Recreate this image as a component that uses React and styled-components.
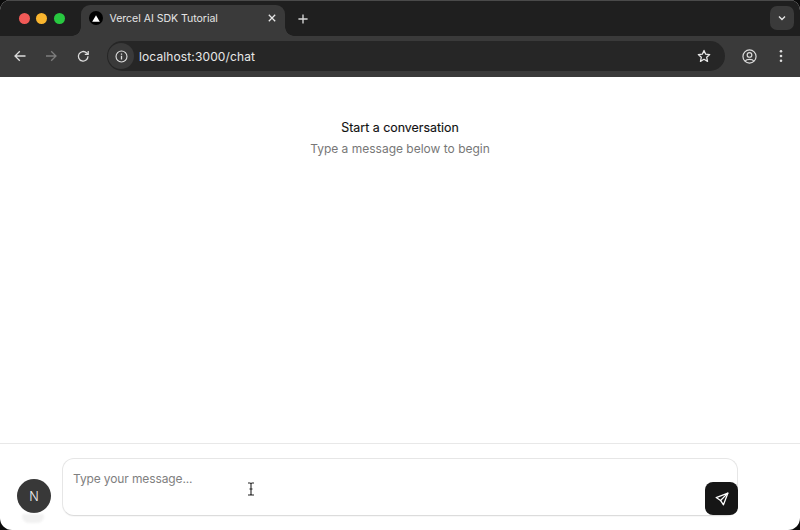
import React from "react";
import styled, { createGlobalStyle } from "styled-components";

const Global = createGlobalStyle`
  html, body { margin: 0; padding: 0; background: #0b0b0b; }
  body { width: 800px; height: 530px; overflow: hidden; font-family: Inter, "Liberation Sans", sans-serif; }
  * { box-sizing: border-box; }
`;

const Win = styled.div`
  width: 800px; height: 530px; display: flex; flex-direction: column;
  background: #fff; border-radius: 10px 10px 12px 12px; overflow: hidden;
`;
const TabStrip = styled.div`
  height: 36px; flex: none; background: #1f1f1f; display: flex; align-items: flex-end;
  border-top: 1px solid #4a4a4a; padding-left: 18.5px; position: relative;
`;
const Lights = styled.div`
  display: flex; gap: 6.5px; align-self: flex-start; margin-top: 12px; width: 62.5px;
`;
const Light = styled.span`
  width: 11px; height: 11px; border-radius: 50%; background: ${p => p.$c};
`;
const Tab = styled.div`
  width: 204px; height: 31px; background: #3a3a3a; border-radius: 9px 9px 0 0; position: relative;
  display: flex; align-items: center; padding: 0 9px 5px 8px; color: #e4e4e4; font-size: 10.6px;
  &::before, &::after {
    content: ""; position: absolute; bottom: 0; width: 9px; height: 9px;
    background: radial-gradient(circle at var(--c), #1f1f1f 8.5px, #3a3a3a 9px);
  }
  &::before { left: -9px; --c: 0 0; }
  &::after { right: -9px; --c: 100% 0; }
`;
const Favicon = styled.span`
  width: 14px; height: 14px; border-radius: 50%; background: #000; flex: none;
  display: flex; align-items: center; justify-content: center; margin-right: 6.5px;
`;
const TabTitle = styled.span`
  flex: 1; white-space: nowrap; letter-spacing: -0.05px;
`;
const Plus = styled.div`
  margin: 0 0 0 13px; width: 14px; height: 14px; align-self: center; display: flex; align-items: center; color: #d8d8d8;
`;
const TabSearch = styled.div`
  position: absolute; right: 6px; top: 5px; width: 24px; height: 24px; border-radius: 7px;
  background: #3a3a3a; display: flex; align-items: center; justify-content: center; color: #e4e4e4;
`;
const Toolbar = styled.div`
  height: 41px; flex: none; background: #3a3a3a; display: flex; align-items: center;
  padding: 0 11px 1px;
`;
const NavIcon = styled.span`
  width: 16px; height: 16px; flex: none; display: flex; align-items: center; justify-content: center;
  margin-right: ${p => p.$mr}px; color: ${p => p.$dim ? "#7d7d7d" : "#dcdcdc"};
`;
const Address = styled.div`
  width: 618px; height: 30px; border-radius: 15px; background: #262626; display: flex; align-items: center;
  color: #e8e8e8; font-size: 12px; padding-right: 14px; margin-right: 16px; flex: none;
`;
const InfoWrap = styled.span`
  width: 26px; height: 26px; border-radius: 50%; background: #3a3a3a; margin: 0 5px 0 1px;
  display: flex; align-items: center; justify-content: center; color: #e0e0e0;
`;
const Url = styled.span`
  flex: 1; letter-spacing: 0.12px;
`;
const Main = styled.main`
  flex: 1; display: flex; flex-direction: column; align-items: center; padding-top: 43px; min-height: 0;
`;
const Title = styled.div`
  font-size: 12.4px; font-weight: 400; color: #111; line-height: 16px; -webkit-text-stroke: 0.15px #111;
`;
const Sub = styled.div`
  font-size: 12px; color: #777; line-height: 16px; margin-top: 5px;
`;
const Footer = styled.footer`
  height: 87px; flex: none; border-top: 1px solid #e8e8e8; display: flex; align-items: flex-start;
  padding: 14px 62px 0 17px; gap: 11px; position: relative;
`;
const Avatar = styled.div`
  width: 34px; height: 34px; border-radius: 50%; background: #383838; color: #f2f2f2; flex: none;
  margin-top: 21px; display: flex; align-items: center; justify-content: center; font-size: 12.5px; font-weight: 300;
  position: relative;
  &::after {
    content: ""; position: absolute; left: 5px; top: 35px; width: 22px; height: 9px;
    background: #f1f1f1; border-radius: 2px 2px 8px 8px; filter: blur(1px);
  }
`;
const Composer = styled.div`
  width: 676px; height: 58px; border: 1px solid #e6e6e6; border-bottom-color: #dcdcdc; border-radius: 12px; background: #fff;
  padding: 12px 10px; font-size: 12px; line-height: 16px; color: #808080; position: relative; letter-spacing: -0.12px;
  box-shadow: 0 1px 1px rgba(0,0,0,.03);
`;
const Send = styled.div`
  position: absolute; right: -1px; bottom: 0; width: 33px; height: 33px; border-radius: 8px; background: #161616;
  display: flex; align-items: center; justify-content: center; color: #fff;
`;
const Caret = styled.svg`
  position: absolute; left: 184px; top: 23px;
`;

export default function App() {
  return (
    <>
      <Global />
      <Win>
        <TabStrip>
          <Lights>
            <Light $c="#f25a57" /><Light $c="#f9b52e" /><Light $c="#28c840" />
          </Lights>
          <Tab>
            <Favicon>
              <svg width="8" height="7" viewBox="0 0 8 7"><path d="M4 0.3 L7.8 6.7 H0.2 Z" fill="#fff" /></svg>
            </Favicon>
            <TabTitle>Vercel AI SDK Tutorial</TabTitle>
            <svg width="8" height="8" viewBox="0 0 10 10" fill="none" stroke="#e8e8e8" strokeWidth="1.6"><path d="M1 1 L9 9 M9 1 L1 9" /></svg>
          </Tab>
          <Plus>
            <svg width="10" height="10" viewBox="0 0 12 12" fill="none" stroke="currentColor" strokeWidth="1.6"><path d="M6 0.5 V11.5 M0.5 6 H11.5" /></svg>
          </Plus>
          <TabSearch>
            <svg width="10" height="10" viewBox="0 0 10 10" fill="none" stroke="currentColor" strokeWidth="1.4"><path d="M2 3.5 L5 6.5 L8 3.5" /></svg>
          </TabSearch>
        </TabStrip>
        <Toolbar>
          <NavIcon $mr={16}>
            <svg width="16" height="16" viewBox="0 0 16 16" fill="none" stroke="currentColor" strokeWidth="1.3"><path d="M14.5 8 H4.5 M8.8 3.2 L4 8 L8.8 12.8" /></svg>
          </NavIcon>
          <NavIcon $mr={16} $dim>
            <svg width="16" height="16" viewBox="0 0 16 16" fill="none" stroke="currentColor" strokeWidth="1.3"><path d="M3 8 H12.5 M8.2 3.2 L13 8 L8.2 12.8" /></svg>
          </NavIcon>
          <NavIcon $mr={16}>
            <svg width="16" height="16" viewBox="0 0 16 16" fill="none" stroke="currentColor" strokeWidth="1.3"><path d="M13 8.3 A4.8 4.8 0 1 1 11.5 4.8 L13 6.2" /><path d="M13.2 3 V6.4 H9.8" /></svg>
          </NavIcon>
          <Address>
            <InfoWrap>
              <svg width="13" height="13" viewBox="0 0 14 14" fill="none" stroke="currentColor" strokeWidth="1.2"><circle cx="7" cy="7" r="5.9" /><path d="M7 6.2 V10.2" strokeWidth="1.4" /><path d="M7 3.8 V5" strokeWidth="1.4" /></svg>
            </InfoWrap>
            <Url>localhost:3000/chat</Url>
            <svg width="14" height="14" viewBox="0 0 24 24" fill="none" stroke="#e8e8e8" strokeWidth="2.2" strokeLinejoin="round"><path d="M12 2.5 L14.9 8.9 L21.8 9.6 L16.6 14.3 L18.1 21.2 L12 17.6 L5.9 21.2 L7.4 14.3 L2.2 9.6 L9.1 8.9 Z" /></svg>
          </Address>
          <NavIcon $mr={16}>
            <svg width="15" height="15" viewBox="0 0 16 16" fill="none" stroke="currentColor" strokeWidth="1.25"><circle cx="8" cy="8" r="7" /><circle cx="8" cy="6.3" r="2.5" /><path d="M3.4 12.8 C5 10.4 11 10.4 12.6 12.8" /></svg>
          </NavIcon>
          <NavIcon $mr={0}>
            <svg width="16" height="16" viewBox="0 0 16 16" fill="currentColor"><circle cx="8" cy="3.2" r="1.3" /><circle cx="8" cy="8" r="1.3" /><circle cx="8" cy="12.8" r="1.3" /></svg>
          </NavIcon>
        </Toolbar>
        <Main>
          <Title>Start a conversation</Title>
          <Sub>Type a message below to begin</Sub>
        </Main>
        <Footer>
          <Avatar>N</Avatar>
          <Composer>
            Type your message...
            <Caret width="8" height="14" viewBox="0 0 8 14" fill="none" stroke="#222" strokeWidth="1.1"><path d="M1 1 H3 Q4 1 4 2 V12 Q4 13 3 13 H1 M7 1 H5 Q4 1 4 2 M4 12 Q4 13 5 13 H7 M2.5 7 H5.5" /></Caret>
            <Send>
              <svg width="14" height="14" viewBox="0 0 24 24" fill="none" stroke="currentColor" strokeWidth="2.2" strokeLinejoin="round" strokeLinecap="round"><path d="M22 2 L2 9.5 L9.5 14.5 L14.5 22 Z" /><path d="M22 2 L9.5 14.5" /></svg>
            </Send>
          </Composer>
        </Footer>
      </Win>
    </>
  );
}
